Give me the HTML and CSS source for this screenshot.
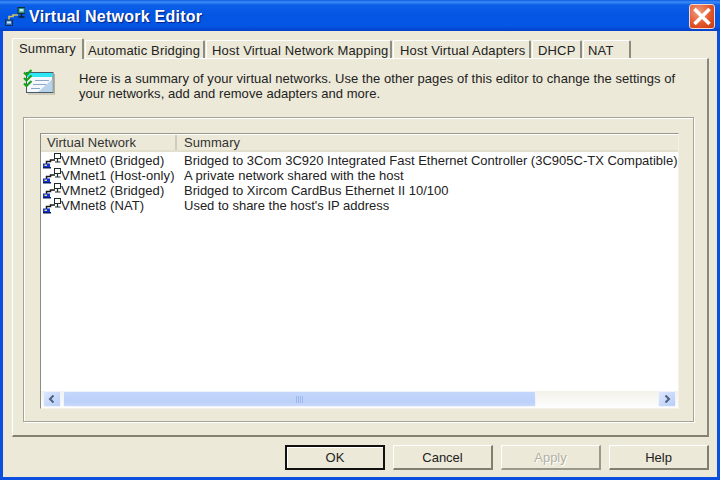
FILE: index.html
```html
<!DOCTYPE html>
<html lang="en">
<head>
<meta charset="utf-8">
<title>Virtual Network Editor</title>
<link rel="stylesheet" href="styles.css">
</head>
<body>
<svg class="defs" width="0" height="0" aria-hidden="true">
  <symbol id="net" viewBox="0 0 20 16">
    <rect x="13.500" y="0.500" width="6" height="5" fill="#fff" stroke="#1c2b2b"/>
    <path d="M16.500 6v2.500M14 9h5.500" stroke="#1c2b2b" stroke-width="1.200" fill="none"/>
    <path d="M5.500 11V8.500H9.500V7H14" stroke="#1a1a1a" stroke-width="1.500" fill="none"/>
    <rect x="2" y="10.500" width="7" height="4.500" fill="#1030d8"/>
    <rect x="2" y="14" width="8" height="1.500" fill="#0a1a6a"/>
    <rect x="3.500" y="11.500" width="2.500" height="1.500" fill="#f4e04a"/>
  </symbol>
</svg>
<div class="window">
  <header class="titlebar">
    <svg class="title-icon" viewBox="0 0 20 20" aria-hidden="true">
      <rect x="13" y="1.500" width="7" height="6" fill="#2f8f8f" stroke="#10302f"/>
      <rect x="14.500" y="3" width="4" height="2.500" fill="#bfeeea"/>
      <path d="M16.500 8v3M13.500 11h6" stroke="#10201f" stroke-width="1.400" fill="none"/>
      <path d="M4 14V10.500H8V9H13" stroke="#d8c060" stroke-width="1.600" fill="none"/>
      <rect x="0.500" y="14" width="7" height="5.500" fill="#2f6fb8" stroke="#0c2c60"/>
      <rect x="2" y="15.500" width="4" height="2" fill="#cfe4f6"/>
    </svg>
    <h1 class="title">Virtual Network Editor</h1>
    <button class="close" aria-label="Close">
      <svg viewBox="0 0 22 22" aria-hidden="true"><path d="M5 5L17 17M17 5L5 17" stroke="#fff" stroke-width="3.400" stroke-linecap="square"/></svg>
    </button>
  </header>
  <main class="client">
    <nav class="tabs">
      <span class="tab active">Summary</span>
      <span class="tab t-bridge">Automatic Bridging</span>
      <span class="tab t-map">Host Virtual Network Mapping</span>
      <span class="tab t-adapt">Host Virtual Adapters</span>
      <span class="tab t-dhcp">DHCP</span>
      <span class="tab t-nat">NAT</span>
    </nav>
    <section class="panel">
      <div class="intro">
        <svg class="intro-icon" viewBox="0 0 32 26" aria-hidden="true">
          <rect x="3.500" y="3.500" width="26.500" height="20" fill="#f4f8fc" stroke="#4a5a68"/>
          <rect x="4" y="4" width="25.500" height="4" fill="#2ee6f2"/>
          <path d="M29.500 10v13H15z" fill="#b8d2ea"/>
          <path d="M12 11.500h14M10 15.500h13M8 19.500h9" stroke="#8aa6c2" stroke-width="1.200"/>
          <path d="M32 25H5M31.500 5v20" stroke="#8d8a78" stroke-width="1" opacity=".6"/>
          <path d="M1 3.500l2.500 2.500 5-5M1 9l2.500 2.500 5-5M1 14.500l2.500 2.500 5-5" stroke="#18a018" stroke-width="2.200" fill="none"/>
        </svg>
        <p class="intro-text">Here is a summary of your virtual networks. Use the other pages of this editor to change the settings of your networks, add and remove adapters and more.</p>
      </div>
      <div class="group">
        <div class="list">
          <div class="list-head">
            <span class="col-a">Virtual Network</span>
            <span class="col-b">Summary</span>
          </div>
          <div class="rows">
            <div class="row"><span class="col-a"><svg class="net"><use href="#net"/></svg>VMnet0 (Bridged)</span><span class="col-b">Bridged to 3Com 3C920 Integrated Fast Ethernet Controller (3C905C-TX Compatible)</span></div>
            <div class="row"><span class="col-a"><svg class="net"><use href="#net"/></svg>VMnet1 (Host-only)</span><span class="col-b">A private network shared with the host</span></div>
            <div class="row"><span class="col-a"><svg class="net"><use href="#net"/></svg>VMnet2 (Bridged)</span><span class="col-b">Bridged to Xircom CardBus Ethernet II 10/100</span></div>
            <div class="row"><span class="col-a"><svg class="net"><use href="#net"/></svg>VMnet8 (NAT)</span><span class="col-b">Used to share the host's IP address</span></div>
          </div>
          <div class="scrollbar">
            <span class="sb-btn"><svg viewBox="0 0 10 10" aria-hidden="true"><path d="M6.500 1.500L3 5l3.500 3.500" stroke="#4d6185" stroke-width="2" fill="none"/></svg></span>
            <div class="sb-track">
              <div class="sb-thumb"><svg viewBox="0 0 10 7" aria-hidden="true"><path d="M1.500 0v7M3.500 0v7M5.500 0v7M7.500 0v7" stroke="#9fb8ea" stroke-width="1"/></svg></div>
            </div>
            <span class="sb-btn"><svg viewBox="0 0 10 10" aria-hidden="true"><path d="M3.500 1.500L7 5 3.500 8.500" stroke="#4d6185" stroke-width="2" fill="none"/></svg></span>
          </div>
        </div>
      </div>
    </section>
    <footer class="buttons">
      <button class="btn default">OK</button>
      <button class="btn">Cancel</button>
      <button class="btn disabled">Apply</button>
      <button class="btn">Help</button>
    </footer>
  </main>
</div>
</body>
</html>
```
FILE: styles.css
```css
* { box-sizing: border-box; }
html, body { margin: 0; padding: 0; }
body { width: 720px; height: 480px; overflow: hidden; font: 13px/15px "Liberation Sans", Arial, sans-serif; color: #222; }
.defs { position: absolute; }
.window { width: 720px; height: 480px; display: flex; flex-direction: column; background: #0a4fe0; padding: 0 3px 3px; }
.titlebar { flex: none; height: 31px; margin: 0 -3px; padding: 0 5px; display: flex; align-items: center; gap: 4px;
  background: linear-gradient(#0a5ae6 0, #3f8cf3 2px, #0a5fe8 5px, #0355e2 16px, #0457e4 26px, #0340c8 31px); }
.title-icon { width: 20px; height: 20px; flex: none; }
.title { flex: 1; margin: 0; font: bold 16px/18px "Liberation Sans", Arial, sans-serif; color: #fff; text-shadow: 1px 1px 1px #0a1f80; letter-spacing: .25px; padding-top: 3px; }
.close { width: 26px; height: 25px; padding: 0; border: 1px solid #f6d8cc; border-radius: 3px; background: radial-gradient(circle at 35% 30%, #f0a080, #e2572c 55%, #c83810); margin-top: 2px; }
.close svg { display: block; width: 24px; height: 23px; }
.client { flex: 1; background: #ece9d8; display: flex; flex-direction: column; padding: 9px 8px 7px 9px; min-height: 0; }
.tabs { flex: none; height: 18px; display: flex; align-items: flex-end; gap: 1px; position: relative; z-index: 1; letter-spacing: .17px; }
.tab { height: 18px; padding: 2px 0 0 5px; border: 1px solid #fff; border-bottom: 0; border-right: 2px solid #8d8c80; border-radius: 2px 2px 0 0; white-space: nowrap; background: #ece9d8; color: #222; }
.tab.active { height: 21px; width: 72px; margin-bottom: -1px; padding: 2px 0 0 6px; }
.t-bridge { width: 120px; padding-left: 2px; }
.t-map { width: 186px; }
.t-adapt { width: 138px; padding-left: 6px; }
.t-dhcp { width: 50px; }
.t-nat { width: 48px; padding-left: 4px; }
.panel { flex: 1; display: flex; flex-direction: column; min-height: 0; border: 1px solid #fff; border-right: 2px solid #8a887c; border-bottom: 2px solid #84826f; padding: 0 13px 13px 10px; }
.intro { flex: none; height: 58px; display: flex; padding-top: 10px; }
.intro-icon { width: 32px; height: 26px; flex: none; }
.intro-text { margin: 2px 0 0 24px; width: 602px; letter-spacing: .057px; color: #222; }
.group { flex: 1; min-height: 0; border: 1px solid #a6a494; box-shadow: 1px 1px 0 #fff, inset 1px 1px 0 #fff; padding: 15px 14px 12px 16px; }
.list { height: 100%; display: flex; flex-direction: column; background: #fff; border: 1px solid #8d8c80; border-right: 1px solid #f3f1e8; border-bottom: 1px solid #f3f1e8; border-top-color: #99978a; }
.list-head { flex: none; height: 18px; display: flex; align-items: center; background: #ece9d8; border-bottom: 2px solid #e2dfcc; box-shadow: inset 0 1px 0 #fff; color: #333; letter-spacing: .07px; }
.list-head .col-a { border-right: 2px solid #cfccba; height: 15px; padding-left: 6px; line-height: 17px; }
.list-head .col-b { line-height: 17px; }
.col-a { display: flex; align-items: center; flex: none; width: 136px; white-space: nowrap; }
.col-b { padding-left: 7px; white-space: nowrap; }
.rows { flex: 1; min-height: 0; padding-top: 1px; overflow: hidden; }
.row { height: 15px; display: flex; align-items: center; color: #222; }
.row .col-a { letter-spacing: .09px; }
.net { width: 20px; height: 16px; flex: none; }
.scrollbar { flex: none; height: 17px; display: flex; gap: 2px; padding: 0 2px 1px; background: linear-gradient(#f2f1ea, #fefefe); }
.sb-btn { flex: none; width: 18px; height: 16px; border: 1px solid #eef3fc; border-radius: 2px; background: linear-gradient(135deg, #dde7fc, #b8cdf8); display: flex; align-items: center; justify-content: center; }
.sb-btn svg { width: 10px; height: 10px; display: block; }
.sb-track { flex: 1; height: 16px; display: flex; }
.sb-thumb { width: 473px; height: 16px; border: 1px solid #eef3fc; border-radius: 2px; background: linear-gradient(#c4d6fb, #bcd0f9 70%, #c9d9fb); display: flex; align-items: center; justify-content: center; }
.sb-thumb svg { width: 10px; height: 7px; display: block; }
.buttons { flex: none; height: 33px; display: flex; justify-content: flex-end; align-items: flex-end; gap: 8px; }
.btn { width: 100px; height: 25px; padding: 0; font: 13px "Liberation Sans", Arial, sans-serif; color: #222; background: #ece9d8; border: 1px solid; border-color: #fff #807e70 #807e70 #fff; border-right-width: 2px; border-bottom-width: 2px; }
.btn.default { border: 2px solid #111; box-shadow: inset 1px 1px 0 #fff; }
.btn.disabled { color: #b2b0a4; text-shadow: 1px 1px 0 #fff; border-color: #fff #9a988a #9a988a #fff; }
```
